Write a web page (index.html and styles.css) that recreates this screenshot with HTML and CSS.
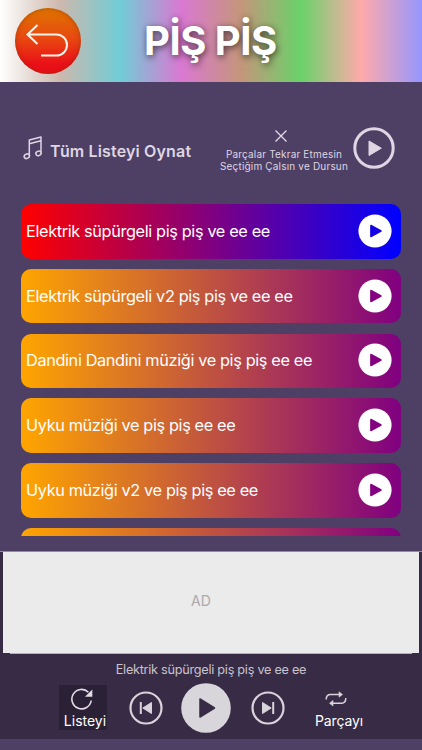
FILE: index.html
```html
<!DOCTYPE html>
<html lang="tr">
<head>
    <meta charset="UTF-8">
    <meta name="viewport" content="width=device-width, initial-scale=1.0">
    <title>Piş Piş</title>
    <link rel="stylesheet" href="styles.css">
</head>
<body>
    <header class="header">
        <button class="back" aria-label="Geri">
            <svg width="66" height="66" viewBox="0 0 66 66"><path d="M22.5 17 12.5 26.5 22.5 36M13 26.5H41.5a10.4 10.4 0 0 1 0 21H26" fill="none" stroke="#fff3e8" stroke-width="2"/></svg>
        </button>
        <h1 class="title">PİŞ PİŞ</h1>
    </header>

    <div class="play-all">
        <svg class="note" width="20" height="24" viewBox="0 0 20 24"><g fill="none" stroke="#ded6e3" stroke-width="1.5" stroke-linejoin="round"><path d="M6.3 19.5V4L18 1V16.5M6.3 7.8 18 4.8"/><ellipse cx="3.8" cy="20.2" rx="2.7" ry="2.2" transform="rotate(-25 3.8 20.2)"/><ellipse cx="15.5" cy="17.4" rx="2.7" ry="2.2" transform="rotate(-25 15.5 17.4)"/></g></svg>
        <span class="play-all-text">Tüm Listeyi Oynat</span>
        <div class="mode">
            <svg width="12" height="12" viewBox="0 0 12 12"><path d="M.5.5l11 11M11.5.5l-11 11" stroke="#e3dce8" stroke-width="1.3"/></svg>
            <span>Parçalar Tekrar Etmesin</span>
            <span>Seçtiğim Çalsın ve Dursun</span>
        </div>
        <svg class="play-big" width="42" height="42" viewBox="0 0 42 42"><circle cx="21" cy="21" r="19.2" fill="none" stroke="#ded6e3" stroke-width="3"/><path d="M16 14v14.5L28.3 21.2z" fill="#ded6e3" stroke="#ded6e3" stroke-linejoin="round"/></svg>
    </div>

    <div class="list">
        <div class="track active">
            <span class="name">Elektrik süpürgeli piş piş ve ee ee</span>
            <svg width="34" height="34" viewBox="0 0 34 34"><circle cx="17" cy="17" r="16.6"/><path d="M12.9 11.5v11L23 17z"/></svg>
        </div>
        <div class="track">
            <span class="name">Elektrik süpürgeli v2 piş piş ve ee ee</span>
            <svg width="34" height="34" viewBox="0 0 34 34"><circle cx="17" cy="17" r="16.6"/><path d="M12.9 11.5v11L23 17z"/></svg>
        </div>
        <div class="track">
            <span class="name">Dandini Dandini müziği ve piş piş ee ee</span>
            <svg width="34" height="34" viewBox="0 0 34 34"><circle cx="17" cy="17" r="16.6"/><path d="M12.9 11.5v11L23 17z"/></svg>
        </div>
        <div class="track">
            <span class="name">Uyku müziği ve piş piş ee ee</span>
            <svg width="34" height="34" viewBox="0 0 34 34"><circle cx="17" cy="17" r="16.6"/><path d="M12.9 11.5v11L23 17z"/></svg>
        </div>
        <div class="track">
            <span class="name">Uyku müziği v2 ve piş piş ee ee</span>
            <svg width="34" height="34" viewBox="0 0 34 34"><circle cx="17" cy="17" r="16.6"/><path d="M12.9 11.5v11L23 17z"/></svg>
        </div>
        <div class="track"></div>
    </div>

    <footer class="player">
        <div class="ad">AD</div>
        <div class="now">Elektrik süpürgeli piş piş ve ee ee</div>
        <div class="controls">
            <div class="repeat selected">
                <svg width="24" height="22" viewBox="0 0 24 22"><path d="M21.2 12.5A9.7 9.7 0 1 1 18.4 4.2" fill="none" stroke="#e3dde5" stroke-width="1.6"/><path d="M22.3 1.5V8.8H15z" fill="#e3dde5"/></svg>
                <span>Listeyi</span>
            </div>
            <svg class="prev" width="34" height="34" viewBox="0 0 34 34"><circle cx="17" cy="17" r="15.5" fill="none" stroke="#d9d4db" stroke-width="2.2"/><path d="M11.8 11v12" stroke="#d9d4db" stroke-width="2"/><path d="M22.5 11.5v11L13.8 17z" fill="#d9d4db" stroke="#d9d4db" stroke-linejoin="round"/></svg>
            <svg class="play" width="50" height="50" viewBox="0 0 50 50"><circle cx="25" cy="25" r="24.8" fill="#d9d6db"/><path d="M19 16v18L33.5 25z" fill="#372b45" stroke="#372b45" stroke-width="1.5" stroke-linejoin="round"/></svg>
            <svg class="next" width="34" height="34" viewBox="0 0 34 34"><circle cx="17" cy="17" r="15.5" fill="none" stroke="#d9d4db" stroke-width="2.2"/><path d="M22.2 11v12" stroke="#d9d4db" stroke-width="2"/><path d="M11.5 11.5v11L20.2 17z" fill="#d9d4db" stroke="#d9d4db" stroke-linejoin="round"/></svg>
            <div class="repeat track-repeat">
                <svg width="22" height="16" viewBox="0 0 22 16"><path d="M1.2 8.5C1.2 5 2.5 3.5 5.5 3.5H16M20.8 7C20.8 10.8 19.5 12.2 16.500 12.2H6" fill="none" stroke="#d9d4db" stroke-width="1.5"/><path d="M14 .8 17.5 3.5 14 6.2zM8 9.5 4.5 12.2 8 15z" fill="#d9d4db" stroke="#d9d4db" stroke-width=".6"/></svg>
                <span>Parçayı</span>
            </div>
        </div>
    </footer>
</body>
</html>
```
FILE: styles.css
```css
* {
    box-sizing: border-box;
}
body {
    margin: 0;
    height: 750px;
    overflow: hidden;
    background: #4e3f65;
    font-family: Inter, sans-serif;
    color: #fff;
    white-space: nowrap;
}
svg {
    display: block;
    flex: none;
}
.header {
    display: flex;
    align-items: flex-start;
    height: 82px;
    padding: 8px 0 0 15px;
    background: linear-gradient(90deg, #fff 0, #cdb8ad 60px, #70cdd6 120px, #da78d2 181px, #c4967a 241px, #6ad26a 301px, #ffaaaa 361px, #9696ff 422px);
}
.back {
    width: 66px;
    height: 66px;
    padding: 0;
    border: none;
    border-radius: 50%;
    background: linear-gradient(#df7400, #e84a10 45%, #ea1018 85%);
    box-shadow: inset 0 0 5px rgba(120, 40, 0, 0.5);
}
.title {
    margin: 9px 0 0 63px;
    font-size: 40px;
    line-height: 48px;
    font-weight: 700;
    letter-spacing: -0.5px;
    text-shadow: 1px 2px 7px rgba(0, 0, 0, 0.65);
}
.play-all {
    display: flex;
    align-items: flex-start;
    height: 122px;
    padding: 45px 0 0 23px;
    color: #ded6e3;
}
.note {
    margin-top: 9px;
}
.play-all-text {
    width: 142px;
    margin: 13px 0 0 7px;
    font-size: 16px;
    line-height: 22px;
    font-weight: 600;
    letter-spacing: 0.15px;
}
.mode {
    display: flex;
    flex-direction: column;
    align-items: center;
    width: 130px;
    margin: 3px 0 0 27px;
    font-size: 10px;
    line-height: 12px;
    letter-spacing: 0.18px;
}
.mode svg {
    margin: 0 0 6px -6px;
}
.play-big {
    margin-left: 4px;
}
.list {
    display: flex;
    flex-direction: column;
    gap: 10.3px;
    height: 332px;
    margin: 0 21px 0 20.5px;
    overflow: hidden;
}
.track {
    display: flex;
    align-items: center;
    justify-content: space-between;
    flex: none;
    height: 54.5px;
    padding: 0 9.5px 1px 5.5px;
    border-radius: 10px;
    background: linear-gradient(90deg, orange, purple);
}
.track.active {
    background: linear-gradient(90deg, red, purple, blue);
}
.track circle {
    fill: #fff;
}
.track path {
    fill: #850080;
    stroke: #850080;
    stroke-width: 1.5px;
    stroke-linejoin: round;
}
.track.active path {
    fill: #1400e6;
    stroke: #1400e6;
}
.name {
    font-size: 16.3px;
    letter-spacing: -0.36px;
}
.player {
    height: 188px;
    margin-top: 15px;
    border-top: 1px solid #9389a6;
    background: #372b45;
}
.ad {
    height: 101px;
    margin: 0 3px;
    padding-right: 20px;
    background: #ebebeb;
    color: #aaa;
    font-size: 14px;
    line-height: 97px;
    text-align: center;
}
.now {
    margin: 0 10px;
    padding-top: 8px;
    border-top: 1px solid #b5afba;
    font-size: 12.7px;
    line-height: 16px;
    letter-spacing: -0.27px;
    text-align: center;
    color: #c9c3ce;
}
.controls {
    display: flex;
    align-items: flex-start;
    padding: 5px 0 0 59px;
}
.repeat {
    display: flex;
    flex-direction: column;
    align-items: center;
    width: 48px;
    height: 45px;
    margin-top: 2px;
    font-size: 14px;
    line-height: 16px;
}
.selected {
    padding: 3px 0 0 4px;
    background: #2b2137;
}
.selected svg {
    margin: 0 6px 3px 0;
}
.prev {
    margin: 8px 0 0 22px;
}
.play {
    margin-left: 18px;
}
.next {
    margin: 8px 0 0 20px;
}
.track-repeat {
    margin-left: 30px;
    padding-top: 6px;
    letter-spacing: -0.1px;
}
.track-repeat svg {
    margin: 0 7px 6px 0;
}
```
